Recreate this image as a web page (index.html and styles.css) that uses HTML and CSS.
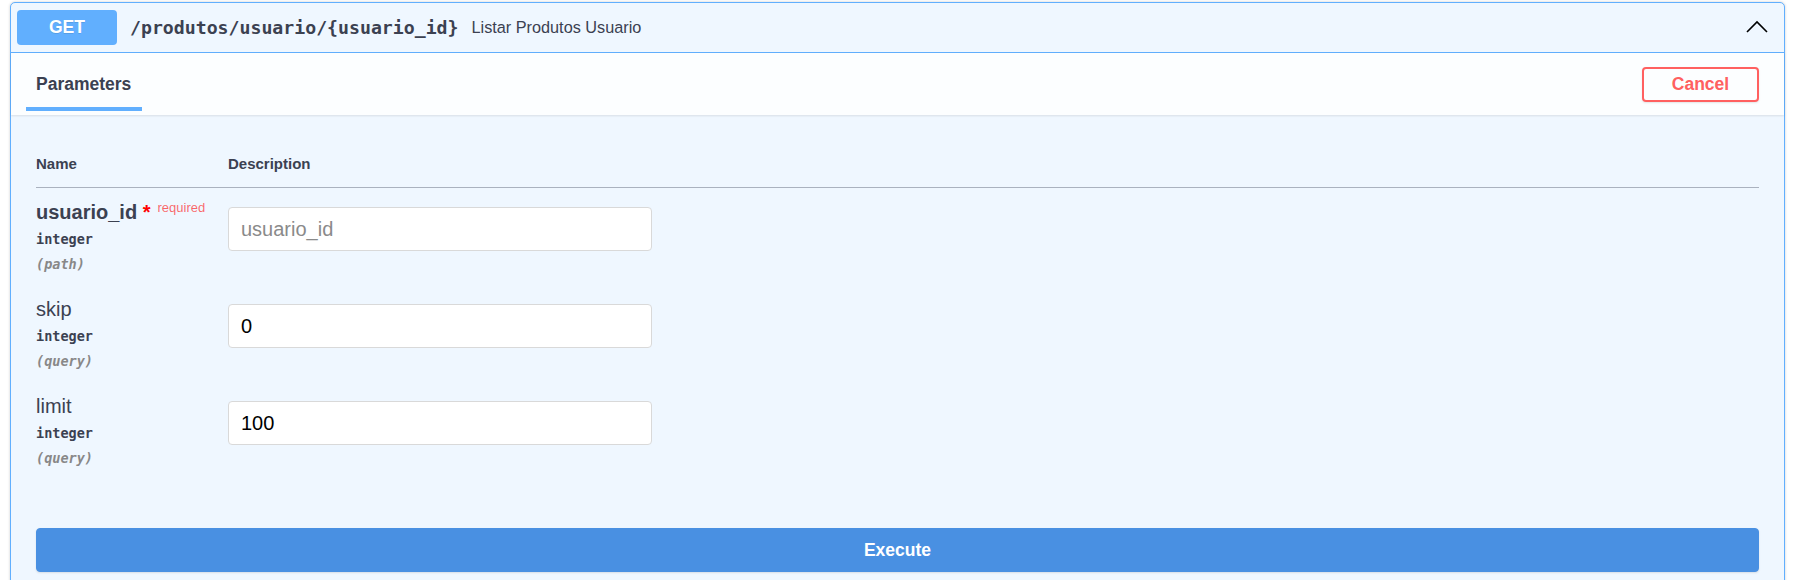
FILE: index.html
```
<!DOCTYPE html>
<html>
<head>
<meta charset="utf-8">
<link rel="stylesheet" href="styles.css">
</head>
<body>
<div class="page">
  <div class="opblock">
    <div class="summary">
      <span class="method">GET</span>
      <span class="path">/produtos/usuario/{usuario_id}</span>
      <span class="summary-desc">Listar Produtos Usuario</span>
      <svg class="arrow" width="22" height="13" viewBox="0 0 22 13"><polyline points="1,12 11,2 21,12" fill="none" stroke="#000" stroke-width="1.6"/></svg>
    </div>
    <div class="section-header">
      <div class="tab"><span class="tab-label">Parameters</span></div>
      <button class="cancel">Cancel</button>
    </div>
    <div class="params">
      <div class="ptable">
        <div class="th">Name</div>
        <div class="th">Description</div>

        <div class="cell name-cell">
          <div class="pname required">usuario_id<span class="star">&nbsp;*</span><span class="req">required</span></div>
          <div class="ptype">integer</div>
          <div class="pin">(path)</div>
        </div>
        <div class="cell"><input class="pinput" type="text" placeholder="usuario_id"></div>

        <div class="cell name-cell">
          <div class="pname">skip</div>
          <div class="ptype">integer</div>
          <div class="pin">(query)</div>
        </div>
        <div class="cell"><input class="pinput" type="text" value="0"></div>

        <div class="cell name-cell">
          <div class="pname">limit</div>
          <div class="ptype">integer</div>
          <div class="pin">(query)</div>
        </div>
        <div class="cell"><input class="pinput" type="text" value="100"></div>
      </div>
    </div>
    <div class="execute-wrap">
      <button class="execute">Execute</button>
    </div>
  </div>
</div>
</body>
</html>
```
FILE: styles.css
```
html, body {
  margin: 0;
  padding: 0;
  background: #fff;
}
.page {
  padding: 2px 14px 0 10px;
  font-family: "Liberation Sans", Arial, sans-serif;
  color: #3b4151;
}
.opblock {
  border: 1px solid #61affe;
  border-radius: 5px;
  background: #eff7ff;
  box-shadow: 0 0 3px rgba(0,0,0,.19);
}
.summary {
  display: flex;
  align-items: center;
  padding: 7px 6px;
  border-bottom: 1px solid #61affe;
}
.method {
  width: 100px;
  height: 35px;
  display: flex;
  align-items: center;
  justify-content: center;
  background: #61affe;
  color: #fff;
  border-radius: 4px;
  font-weight: bold;
  font-size: 17.5px;
  text-shadow: 0 1px 0 rgba(0,0,0,.1);
}
.path {
  margin-left: 13px;
  font-family: "DejaVu Sans Mono", monospace;
  font-weight: bold;
  font-size: 18.2px;
  color: #3b4151;
}
.summary-desc {
  margin-left: 13px;
  font-size: 16.25px;
  color: #3b4151;
}
.arrow {
  margin-left: auto;
  margin-right: 10px;
  margin-top: -3px;
}
.section-header {
  height: 62px;
  display: flex;
  align-items: center;
  justify-content: space-between;
  padding: 0 25px;
  background: rgba(255,255,255,.8);
  box-shadow: 0 1px 2px rgba(0,0,0,.1);
}
.tab {
  position: relative;
  height: 100%;
  display: flex;
  align-items: center;
}
.tab-label {
  font-weight: bold;
  font-size: 17.5px;
  color: #3b4151;
}
.tab::after {
  content: "";
  position: absolute;
  left: -10px;
  right: -11px;
  bottom: 4px;
  height: 4px;
  background: #61affe;
}
.cancel {
  width: 117px;
  height: 35px;
  border: 2px solid #ff6060;
  border-radius: 4px;
  background: transparent;
  color: #ff6060;
  font-family: "Liberation Sans", Arial, sans-serif;
  font-weight: bold;
  font-size: 17.5px;
  box-shadow: 0 1px 2px rgba(0,0,0,.1);
}
.params {
  padding: 26px 25px 0 25px;
}
.ptable {
  display: grid;
  grid-template-columns: 192px 1fr;
}
.th {
  padding: 15px 0;
  line-height: 16px;
  font-size: 15px;
  font-weight: bold;
  border-bottom: 1px solid #aab2bf;
}
.cell {
  padding: 13px 0;
}
.pname {
  height: 22px;
  font-size: 20px;
  line-height: 22px;
  color: #3b4151;
  white-space: nowrap;
}
.pname.required {
  font-weight: bold;
}
.star {
  color: red;
  line-height: 0;
}
.req {
  position: relative;
  top: -7px;
  padding: 0 7px;
  font-size: 13px;
  line-height: 0;
  font-weight: normal;
  color: rgba(255,0,0,.6);
}
.ptype {
  padding: 8px 0 9px;
  font-family: "DejaVu Sans Mono", monospace;
  font-weight: bold;
  font-size: 13.5px;
  line-height: 16px;
  color: #3b4151;
}
.pin {
  font-family: "DejaVu Sans Mono", monospace;
  font-style: italic;
  font-weight: bold;
  font-size: 13.5px;
  line-height: 16px;
  color: #888;
}
.pinput {
  display: block;
  box-sizing: border-box;
  width: 424px;
  height: 44px;
  margin-top: 6px;
  padding: 0 12px;
  border: 1px solid #d9d9d9;
  border-radius: 4px;
  background: #fff;
  font-family: "Liberation Sans", Arial, sans-serif;
  font-size: 20px;
  color: #000;
  outline: none;
}
.pinput::placeholder {
  color: #8a8a8a;
}
.execute-wrap {
  padding: 49px 25px 30px;
}
.execute {
  display: block;
  width: 100%;
  height: 44px;
  border: 1px solid #4990e2;
  border-radius: 4px;
  background: #4990e2;
  color: #fff;
  font-family: "Liberation Sans", Arial, sans-serif;
  font-weight: bold;
  font-size: 17.5px;
  box-shadow: 0 1px 2px rgba(0,0,0,.1);
}
```
